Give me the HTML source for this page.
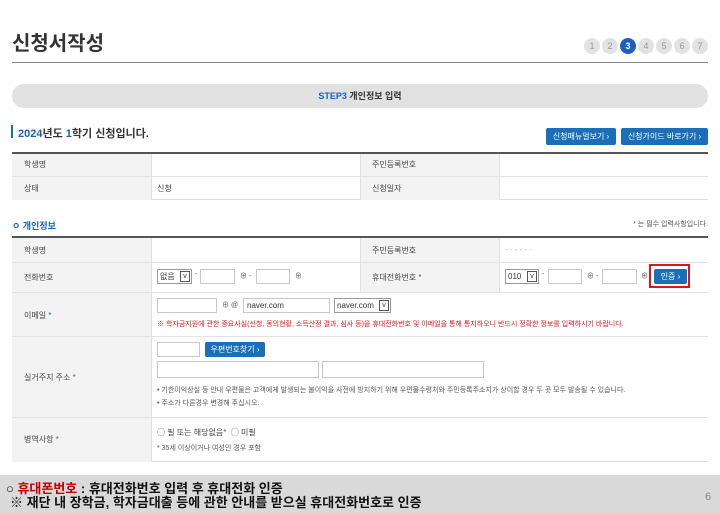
<!DOCTYPE html><html><head><meta charset="utf-8"><style>
*{margin:0;padding:0;box-sizing:border-box}
body{width:720px;height:514px;background:#fff;font-family:"Liberation Sans","Noto Sans CJK KR",sans-serif;position:relative;overflow:hidden;color:#333}
.a{position:absolute;white-space:nowrap}
.c{position:absolute;width:16px;height:16px;border-radius:8px;background:#e2e2e2;color:#999;font-size:9px;text-align:center;line-height:16px;top:38px}
.h{position:absolute;height:1px;background:#e2e2e2;left:12px;width:696px}
.v{position:absolute;width:1px;background:#e2e2e2}
.lab{position:absolute;font-size:8px;color:#444}
.inp{position:absolute;border:1px solid #c8c8c8;background:#fff;height:15px}
.sel{position:absolute;border:1px solid #999;background:#fff;height:15px;font-size:8px;line-height:13px;padding-left:2px}
.sel i{position:absolute;right:1px;top:1px;width:10px;height:11px;border:1px solid #555;font-style:normal;font-size:7px;line-height:9px;text-align:center}
.btn{position:absolute;background:#1b6fb8;color:#fff;font-size:8px;text-align:center;border-radius:2px}
.sm{font-size:7px;color:#555}
</style></head><body>
<div class="a" style="left:12px;top:27px;font-size:20px;color:#333;font-weight:bold">신청서작성</div>
<div class="c" style="left:584px">1</div><div class="c" style="left:602px">2</div>
<div class="c" style="left:620px;background:#1b5fbf;color:#fff;font-weight:bold">3</div>
<div class="c" style="left:638px">4</div><div class="c" style="left:656px">5</div><div class="c" style="left:674px">6</div><div class="c" style="left:692px">7</div>
<div class="a" style="left:12px;top:62px;width:696px;height:1px;background:#888"></div>
<div class="a" style="left:12px;top:84px;width:696px;height:24px;border-radius:12px;background:#e1e1e1;font-size:9px;text-align:center;line-height:24px;font-weight:bold;color:#333"><span style="color:#1b5fbf">STEP3</span> 개인정보 입력</div>
<div class="a" style="left:11px;top:125px;width:2px;height:13px;background:#1b6fb8"></div>
<div class="a" style="left:18px;top:125px;font-size:11px;font-weight:bold;color:#333"><span style="color:#1b5fbf">2024</span>년도 <span style="color:#1b5fbf">1</span>학기 신청입니다.</div>
<div class="btn" style="left:546px;top:128px;width:70px;height:17px;line-height:17px">신청매뉴얼보기 ›</div>
<div class="btn" style="left:621px;top:128px;width:87px;height:17px;line-height:17px">신청가이드 바로가기 ›</div>
<div class="a" style="left:12px;top:152px;width:696px;height:48px;border-top:2px solid #555;border-bottom:1px solid #ddd"></div>
<div class="a" style="left:12px;top:154px;width:139px;height:46px;background:#f3f3f3"></div>
<div class="a" style="left:360px;top:154px;width:139px;height:46px;background:#f3f3f3"></div>
<div class="h" style="top:176px"></div>
<div class="v" style="left:151px;top:154px;height:46px"></div><div class="v" style="left:360px;top:154px;height:46px"></div><div class="v" style="left:499px;top:154px;height:46px"></div>
<div class="lab" style="left:24px;top:159px">학생명</div><div class="lab" style="left:372px;top:159px">주민등록번호</div>
<div class="lab" style="left:24px;top:183px">상태</div><div class="lab" style="left:157px;top:183px">신청</div><div class="lab" style="left:372px;top:183px">신청일자</div>
<div class="a" style="left:12px;top:219px;font-size:9px;font-weight:bold;color:#1b5fbf">ㅇ 개인정보</div>
<div class="a sm" style="right:12px;top:219px"><span style="color:#1b6fb8">*</span> 는 필수 입력사항입니다.</div>
<div class="a" style="left:12px;top:236px;width:696px;height:226px;border-top:2px solid #555;border-bottom:1px solid #ddd"></div>
<div class="a" style="left:12px;top:238px;width:139px;height:224px;background:#f3f3f3"></div>
<div class="a" style="left:360px;top:238px;width:139px;height:54px;background:#f3f3f3"></div>
<div class="h" style="top:262px"></div><div class="h" style="top:292px"></div><div class="h" style="top:336px"></div><div class="h" style="top:417px"></div>
<div class="v" style="left:151px;top:238px;height:224px"></div><div class="v" style="left:360px;top:238px;height:54px"></div><div class="v" style="left:499px;top:238px;height:54px"></div>
<div class="lab" style="left:24px;top:245px">학생명</div><div class="lab" style="left:372px;top:245px">주민등록번호</div>
<div class="lab" style="left:505px;top:245px;color:#bbb">- - - - - -</div>
<div class="lab" style="left:24px;top:272px">전화번호</div>
<div class="sel" style="left:157px;top:269px;width:35px">없음<i>v</i></div>
<div class="a sm" style="left:195px;top:271px">-</div>
<div class="inp" style="left:200px;top:269px;width:35px"></div><div class="a sm" style="left:240px;top:271px">⊕ -</div>
<div class="inp" style="left:256px;top:269px;width:34px"></div><div class="a sm" style="left:295px;top:271px">⊕</div>
<div class="lab" style="left:372px;top:272px">휴대전화번호 <span style="color:#1b6fb8">*</span></div>
<div class="sel" style="left:505px;top:269px;width:34px">010<i>v</i></div>
<div class="a sm" style="left:542px;top:271px">-</div>
<div class="inp" style="left:548px;top:269px;width:34px"></div><div class="a sm" style="left:587px;top:271px">⊕ -</div>
<div class="inp" style="left:602px;top:269px;width:35px"></div><div class="a sm" style="left:641px;top:271px">⊕</div>
<div class="a" style="left:649px;top:264px;width:41px;height:24px;border:2px solid #e0141b"></div>
<div class="btn" style="left:654px;top:269px;width:33px;height:15px;line-height:15px">인증 ›</div>
<div class="lab" style="left:24px;top:310px">이메일 <span style="color:#1b6fb8">*</span></div>
<div class="inp" style="left:157px;top:298px;width:60px"></div><div class="a sm" style="left:222px;top:300px">⊕ @</div>
<div class="inp" style="left:243px;top:298px;width:87px;font-size:8px;line-height:13px;padding-left:3px">naver.com</div>
<div class="sel" style="left:334px;top:298px;width:57px">naver.com<i>v</i></div>
<div class="a" style="left:157px;top:319px;font-size:7px;color:#e0141b">※ 학자금지원에 관한 중요사실(신청, 동의현황, 소득산정 결과, 심사 등)을 휴대전화번호 및 이메일을 통해 통지하오니 반드시 정확한 정보를 입력하시기 바랍니다.</div>
<div class="lab" style="left:24px;top:372px">실거주지 주소 <span style="color:#1b6fb8">*</span></div>
<div class="inp" style="left:157px;top:342px;width:43px"></div>
<div class="btn" style="left:205px;top:342px;width:60px;height:15px;line-height:15px">우편번호찾기 ›</div>
<div class="inp" style="left:157px;top:361px;width:162px;height:17px"></div>
<div class="inp" style="left:322px;top:361px;width:162px;height:17px"></div>
<div class="a sm" style="left:157px;top:385px">• 기한이익상실 등 안내 우편물은 고객에게 발생되는 불이익을 사전에 방지하기 위해 우편물수령처와 주민등록주소지가 상이할 경우 두 곳 모두 발송될 수 있습니다.</div>
<div class="a sm" style="left:157px;top:398px">• 주소가 다른경우 변경해 주십시오.</div>
<div class="lab" style="left:24px;top:434px">병역사항 <span style="color:#1b6fb8">*</span></div>
<div class="a" style="left:157px;top:427px;font-size:8px;color:#444">◯ 필 또는 해당없음<span style="color:#1b6fb8">*</span> &nbsp;◯ 미필</div>
<div class="a sm" style="left:157px;top:443px">* 35세 이상이거나 여성인 경우 포함</div>
<div class="a" style="left:0;top:475px;width:720px;height:39px;background:#d9d9d9"></div>
<div class="a" style="left:6px;top:478px;font-size:13px;font-weight:bold;color:#111">○ <span style="color:#c00000">휴대폰번호</span> : 휴대전화번호 입력 후 휴대전화 인증</div>
<div class="a" style="left:10px;top:492px;font-size:13px;font-weight:bold;color:#111">※ 재단 내 장학금, 학자금대출 등에 관한 안내를 받으실 휴대전화번호로 인증</div>
<div class="a" style="left:705px;top:491px;font-size:11px;color:#888">6</div>
</body></html>
